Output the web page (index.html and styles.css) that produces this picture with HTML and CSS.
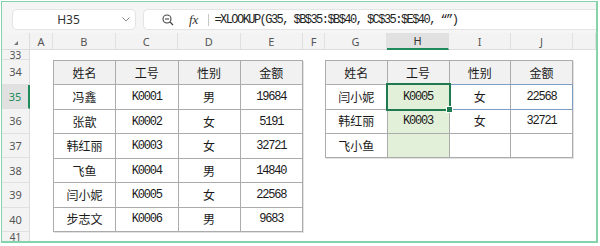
FILE: index.html
```html
<!DOCTYPE html>
<html lang="zh-CN">
<head>
    <meta charset="UTF-8">
    <title>XLOOKUP</title>
    <link rel="stylesheet" href="styles.css">
</head>
<body>
    <div class="frame">
        <!-- Name box and formula bar -->
        <div class="toolbar">
            <div class="namebox">
                <span class="name">H35</span>
                <svg class="chevron" width="8" height="5" viewBox="0 0 8 5"><path d="M0.5 0.5 L4 4 L7.5 0.5" fill="none" stroke="#888" stroke-width="1"/></svg>
            </div>
            <div class="formula">
                <svg class="lookup" width="12" height="12" viewBox="0 0 12 12">
                    <circle cx="5" cy="5" r="4" fill="none" stroke="#444" stroke-width="1.1"/>
                    <path d="M3 5 H7" stroke="#444" stroke-width="1.1"/>
                    <path d="M8 8 L11 11" stroke="#444" stroke-width="1.3"/>
                </svg>
                <span class="fx">fx</span>
                <span class="fsep"></span>
                <span class="ftext">=XLOOKUP(G35, $B$35:$B$40, $C$35:$E$40, “”)</span>
            </div>
        </div>

        <!-- Sheet -->
        <div class="sheet">
            <div class="corner"><span class="tri"></span></div>
            <div class="colhead">A</div>
            <div class="colhead">B</div>
            <div class="colhead">C</div>
            <div class="colhead">D</div>
            <div class="colhead">E</div>
            <div class="colhead">F</div>
            <div class="colhead">G</div>
            <div class="colhead active-col">H</div>
            <div class="colhead">I</div>
            <div class="colhead">J</div>
            <div class="colhead"></div>

            <div class="rowhead r33">33</div>
            <div class="rowhead r34">34</div>
            <div class="rowhead r35 active-row">35</div>
            <div class="rowhead r36">36</div>
            <div class="rowhead r37">37</div>
            <div class="rowhead r38">38</div>
            <div class="rowhead r39">39</div>
            <div class="rowhead r40">40</div>
            <div class="rowhead r41">41</div>

            <!-- Source table B34:E40 -->
            <div class="table source">
                <div class="cell head">姓名</div>
                <div class="cell head">工号</div>
                <div class="cell head">性别</div>
                <div class="cell head">金额</div>

                <div class="cell">冯鑫</div>
                <div class="cell num">K0001</div>
                <div class="cell">男</div>
                <div class="cell num">19684</div>

                <div class="cell">张歆</div>
                <div class="cell num">K0002</div>
                <div class="cell">女</div>
                <div class="cell num">5191</div>

                <div class="cell">韩红丽</div>
                <div class="cell num">K0003</div>
                <div class="cell">女</div>
                <div class="cell num">32721</div>

                <div class="cell">飞鱼</div>
                <div class="cell num">K0004</div>
                <div class="cell">男</div>
                <div class="cell num">14840</div>

                <div class="cell">闫小妮</div>
                <div class="cell num">K0005</div>
                <div class="cell">女</div>
                <div class="cell num">22568</div>

                <div class="cell">步志文</div>
                <div class="cell num">K0006</div>
                <div class="cell">男</div>
                <div class="cell num">9683</div>
            </div>

            <!-- Lookup table G34:J37 -->
            <div class="table lookup-table">
                <div class="cell head">姓名</div>
                <div class="cell head">工号</div>
                <div class="cell head">性别</div>
                <div class="cell head">金额</div>

                <div class="cell">闫小妮</div>
                <div class="cell num filled">K0005</div>
                <div class="cell">女</div>
                <div class="cell num">22568</div>

                <div class="cell">韩红丽</div>
                <div class="cell num filled">K0003</div>
                <div class="cell">女</div>
                <div class="cell num">32721</div>

                <div class="cell">飞小鱼</div>
                <div class="cell filled"></div>
                <div class="cell"></div>
                <div class="cell"></div>

                <!-- spill range and selected cell -->
                <div class="spill"></div>
                <div class="selected"><span class="handle"></span></div>
            </div>
        </div>
    </div>
</body>
</html>
```

FILE: styles.css
```css
body {
    margin: 0;
    background-color: #fff;
    font-family: "Noto Sans", "Noto Sans CJK SC", sans-serif;
}

.frame {
    margin: 1px 0 0 1px;
    width: 597px;
    height: 242px;
    box-sizing: border-box;
    border: 1px solid #84d3a9;
    border-right-width: 2px;
    border-bottom-width: 2px;
    overflow: hidden;
    display: flex;
    flex-direction: column;
}

/* toolbar */
.toolbar {
    flex: none;
    height: 31px;
    box-sizing: border-box;
    padding: 7px 0 0 10px;
    background-color: #f5f5f5;
    display: flex;
    align-items: flex-start;
    gap: 7px;
}

.namebox {
    width: 124px;
    height: 21px;
    box-sizing: border-box;
    background-color: #fff;
    border: 1px solid #e4e4e4;
    border-radius: 5px;
    display: flex;
    align-items: center;
    padding-right: 5px;
}

.name {
    flex: 1;
    text-align: center;
    font-size: 12px;
    color: #333;
    padding-left: 2px;
}

.formula {
    flex: 1;
    height: 21px;
    box-sizing: border-box;
    background-color: #fff;
    border: 1px solid #e4e4e4;
    border-right: none;
    border-radius: 5px 0 0 5px;
    display: flex;
    align-items: center;
    padding-left: 18px;
}

.lookup {
    margin-right: 15px;
}

.fx {
    font-family: "Liberation Serif", serif;
    font-style: italic;
    font-size: 13px;
    color: #333;
}

.fsep {
    width: 1px;
    height: 12px;
    background-color: #c8c8c8;
    margin: 0 5px 0 10px;
}

.ftext {
    font-family: "Liberation Mono", monospace;
    font-size: 12px;
    letter-spacing: -1.55px;
    color: #222;
    white-space: nowrap;
}

/* sheet grid */
.sheet {
    flex: 1;
    display: grid;
    grid-template-columns: 28px 23px repeat(4, 62.5px) 22px repeat(4, 62px) 1fr;
    grid-template-rows: 17px 10px repeat(7, 24.6px) 1fr;
    background-color: #fff;
}

.corner {
    grid-row: 1;
    grid-column: 1;
    background-color: #f3f3f3;
    border-bottom: 1px solid #dcdcdc;
    border-right: 1px solid #dcdcdc;
    position: relative;
}

.tri {
    position: absolute;
    left: 12px;
    top: 8px;
    width: 0;
    height: 0;
    border-left: 4px solid transparent;
    border-bottom: 4px solid #777;
}

.colhead {
    grid-row: 1;
    background-color: #f3f3f3;
    border-bottom: 1px solid #dcdcdc;
    border-right: 1px solid #e0e0e0;
    font-size: 11px;
    color: #555;
    display: flex;
    align-items: center;
    justify-content: center;
}

.active-col {
    background-color: #e1e1e1;
    border-bottom: 2px solid #1f8a5a;
    color: #333;
}

.rowhead {
    grid-column: 1;
    background-color: #f3f3f3;
    border-bottom: 1px solid #e0e0e0;
    border-right: 1px solid #dcdcdc;
    font-size: 11px;
    color: #555;
    display: flex;
    align-items: center;
    justify-content: center;
    line-height: 1;
}

.r33 { grid-row: 2; font-size: 10px; }
.r34 { grid-row: 3; }
.r35 { grid-row: 4; }
.r36 { grid-row: 5; }
.r37 { grid-row: 6; }
.r38 { grid-row: 7; }
.r39 { grid-row: 8; }
.r40 { grid-row: 9; }
.r41 { grid-row: 10; align-items: flex-start; font-size: 10px; }

.active-row {
    background-color: #e1e1e1;
    border-right: 2px solid #1f8a5a;
    color: #1f8a5a;
}

/* data tables */
.table {
    display: grid;
    grid-template-columns: repeat(4, 1fr);
    border-top: 1px solid #ababab;
    border-left: 1px solid #ababab;
    box-shadow: 1px 1px 0 #e2e2e2;
    position: relative;
}

.source {
    grid-column: 3 / 7;
    grid-row: 3 / 10;
    grid-template-rows: repeat(7, 1fr);
}

.lookup-table {
    grid-column: 8 / 12;
    grid-row: 3 / 7;
    grid-template-rows: repeat(4, 1fr);
}

.cell {
    border-right: 1px solid #ababab;
    border-bottom: 1px solid #ababab;
    display: flex;
    align-items: center;
    justify-content: center;
    font-size: 12px;
    color: #1a1a1a;
}

.cell.head {
    background-color: #f1f1f1;
}

.cell.num {
    font-family: "Liberation Mono", monospace;
    letter-spacing: -1.2px;
}

.cell.filled {
    background-color: #e3f0d9;
}

.spill {
    position: absolute;
    grid-area: 2 / 2 / 3 / 5;
    top: -1px;
    left: -1px;
    right: 0;
    bottom: 0;
    border: 1px solid #7f9ec6;
}

.selected {
    position: absolute;
    border: 2px solid #1f7a4f;
    grid-area: 2 / 2 / 3 / 3;
    inset: -2px -1px -1px -2px;
    pointer-events: none;
}

.handle {
    position: absolute;
    right: -4px;
    bottom: -4px;
    width: 5px;
    height: 5px;
    background-color: #1f7a4f;
    border: 1px solid #fff;
}
```
